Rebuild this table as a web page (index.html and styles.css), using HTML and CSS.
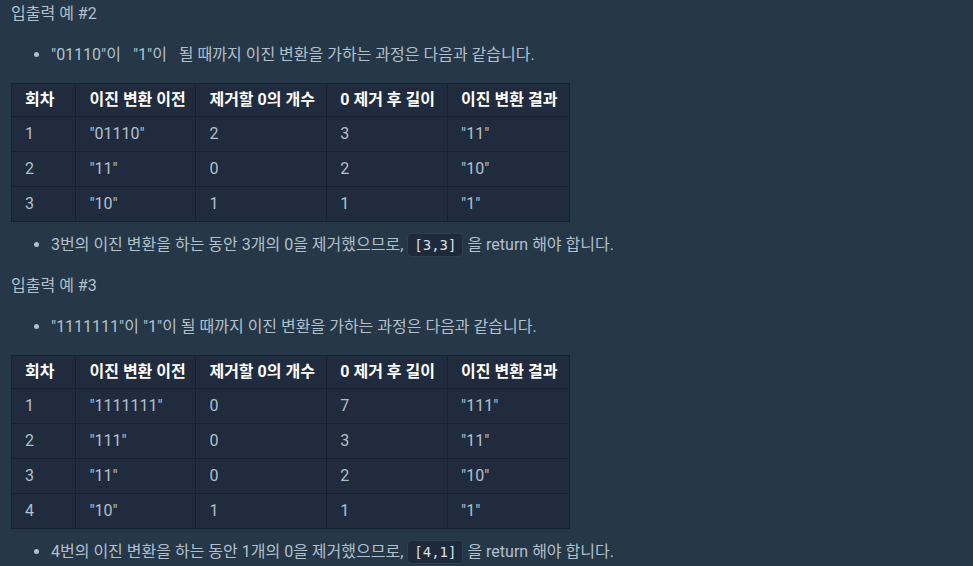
FILE: index.html
```html
<!DOCTYPE html>
<html lang="ko">
<head>
  <meta charset="UTF-8" />
  <title>입출력 예</title>
  <link rel="stylesheet" href="styles.css">
</head>
<body>
  <div class="desc">
    <p class="title">입출력 예 #2</p>
    <ul>
      <li><span class="lead">"01110"이 "1"이 </span>될 때까지 이진 변환을 가하는 과정은 다음과 같습니다.</li>
    </ul>
    <table>
      <thead>
        <tr><th>회차</th><th>이진 변환 이전</th><th>제거할 0의 개수</th><th>0 제거 후 길이</th><th>이진 변환 결과</th></tr>
      </thead>
      <tbody>
        <tr><td>1</td><td>"01110"</td><td>2</td><td>3</td><td>"11"</td></tr>
        <tr><td>2</td><td>"11"</td><td>0</td><td>2</td><td>"10"</td></tr>
        <tr><td>3</td><td>"10"</td><td>1</td><td>1</td><td>"1"</td></tr>
      </tbody>
    </table>
    <ul class="after">
      <li>3번의 이진 변환을 하는 동안 3개의 0을 제거했으므로, <code>[3,3]</code> 을 return 해야 합니다.</li>
    </ul>

    <p class="title">입출력 예 #3</p>
    <ul>
      <li>"1111111"이 "1"이 될 때까지 이진 변환을 가하는 과정은 다음과 같습니다.</li>
    </ul>
    <table>
      <thead>
        <tr><th>회차</th><th>이진 변환 이전</th><th>제거할 0의 개수</th><th>0 제거 후 길이</th><th>이진 변환 결과</th></tr>
      </thead>
      <tbody>
        <tr><td>1</td><td>"1111111"</td><td>0</td><td>7</td><td>"111"</td></tr>
        <tr><td>2</td><td>"111"</td><td>0</td><td>3</td><td>"11"</td></tr>
        <tr><td>3</td><td>"11"</td><td>0</td><td>2</td><td>"10"</td></tr>
        <tr><td>4</td><td>"10"</td><td>1</td><td>1</td><td>"1"</td></tr>
      </tbody>
    </table>
    <ul class="after">
      <li>4번의 이진 변환을 하는 동안 1개의 0을 제거했으므로, <code>[4,1]</code> 을 return 해야 합니다.</li>
    </ul>
  </div>
</body>
</html>
```

FILE: styles.css
```css
* {
  box-sizing: border-box;
}

body {
  margin: 0;
  background-color: #263747;
  color: #b2c0cc;
  font-family: Roboto, "Noto Sans CJK KR", sans-serif;
  font-size: 16px;
  line-height: 24px;
}

.desc {
  padding: 2px 11px 0;
}

.title {
  margin: 0 0 17px;
}

ul {
  margin: 0 0 16px;
  padding-left: 40px;
}

ul.after {
  margin-bottom: 17px;
}

.lead {
  word-spacing: 8px;
}

code {
  display: inline-block;
  vertical-align: top;
  font-family: "DejaVu Sans Mono", monospace;
  font-size: 14px;
  line-height: 20px;
  color: #d6e1ea;
  background-color: #1e293a;
  border: 1px solid #2e3c4d;
  border-radius: 4px;
  padding: 1px 6px;
}

table {
  width: 559px;
  border-collapse: collapse;
  background-color: #202b3d;
  margin-bottom: 11px;
}

th, td {
  border: 1px solid #172130;
  padding: 5px 8px 5px 13px;
  text-align: left;
  font-weight: normal;
  white-space: nowrap;
}

th {
  color: #ffffff;
  font-weight: 700;
  padding: 4px 8px 4px 13px;
}

th:nth-child(1) { width: 65px; }
th:nth-child(2) { width: 120px; }
th:nth-child(3) { width: 131px; }
th:nth-child(4) { width: 121px; }
th:nth-child(5) { width: 122px; }
```
